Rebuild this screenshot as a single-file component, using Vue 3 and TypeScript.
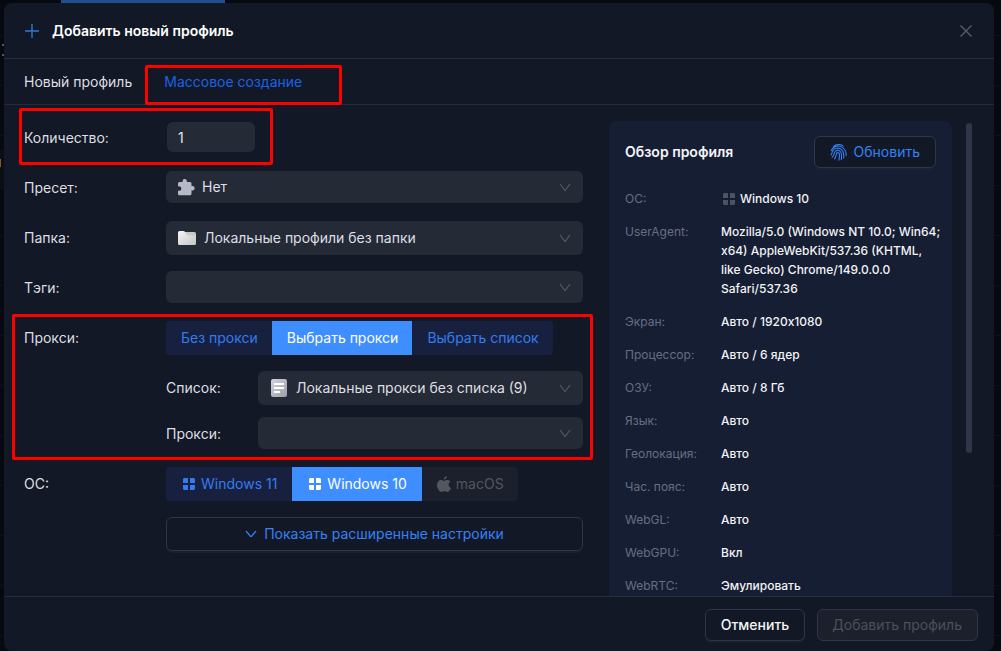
<script setup lang="ts">
import { ref } from 'vue'

const amount = ref('1')
const proxyMode = ref('pick')
const os = ref('win10')

const proxyModes = [
  { id: 'none', label: 'Без прокси' },
  { id: 'pick', label: 'Выбрать прокси' },
  { id: 'list', label: 'Выбрать список' },
]

const overview = [
  { name: 'ОС:', value: 'Windows 10', icon: true },
  { name: 'UserAgent:', value: 'Mozilla/5.0 (Windows NT 10.0; Win64; x64) AppleWebKit/537.36 (KHTML, like Gecko) Chrome/149.0.0.0 Safari/537.36' },
  { name: 'Экран:', value: 'Авто / 1920x1080' },
  { name: 'Процессор:', value: 'Авто / 6 ядер' },
  { name: 'ОЗУ:', value: 'Авто / 8 Гб' },
  { name: 'Язык:', value: 'Авто' },
  { name: 'Геолокация:', value: 'Авто' },
  { name: 'Час. пояс:', value: 'Авто' },
  { name: 'WebGL:', value: 'Авто' },
  { name: 'WebGPU:', value: 'Вкл' },
  { name: 'WebRTC:', value: 'Эмулировать' },
]
</script>

<template>
  <div class="page">
    <div class="backdrop-strip"></div>
    <div class="backdrop-band"></div>
    <div class="backdrop-mark upper"></div>
    <div class="backdrop-mark lower"></div>
    <section class="dialog" role="dialog" aria-labelledby="dialog-title">
      <header class="head">
        <svg class="plus" width="14" height="14" viewBox="0 0 14 14" aria-hidden="true">
          <path d="M7 0v14M0 7h14" stroke="currentColor" stroke-width="1.4" />
        </svg>
        <h1 id="dialog-title">Добавить новый профиль</h1>
        <button class="close" type="button" aria-label="Закрыть">
          <svg width="12" height="12" viewBox="0 0 12 12" aria-hidden="true">
            <path d="M0.5 0.5l11 11M11.5 0.5l-11 11" stroke="currentColor" stroke-width="1.3" />
          </svg>
        </button>
      </header>

      <nav class="tabs">
        <a href="#single">Новый профиль</a>
        <a href="#mass" class="active">Массовое создание<span class="mark mark-tab"></span></a>
      </nav>

      <main class="body">
        <form class="form" @submit.prevent>
          <div class="row">
            <label class="name" for="amount">Количество:</label>
            <input id="amount" v-model="amount" class="amount" type="text" inputmode="numeric" />
            <span class="mark mark-amount"></span>
          </div>

          <div class="row">
            <label class="name" for="preset">Пресет:</label>
            <div class="field">
              <svg class="lead puzzle" width="17" height="17" viewBox="0 0 17 17" aria-hidden="true">
                <path fill="#b6bac6" d="M1.5 3H4.6C4.3 1.2 5.2 0 6.7 0S9.1 1.2 8.8 3H12q1.500 0 1.500 1.500V7.200C15.300 6.700 16.600 7.700 16.600 9.300S15.300 11.900 13.500 11.300V14.800q0 1.500-1.500 1.500H1.500Q0 16.300 0 14.800V11.700C2 12.300 3.300 11.200 3.300 9.500S2 6.800 0 7.400V4.500Q0 3 1.500 3z" />
              </svg>
              <select id="preset"><option>Нет</option></select>
              <svg class="chev" width="12" height="9" viewBox="0 0 12 9" aria-hidden="true"><path d="M1 1l5 6.500 5-6.500" /></svg>
            </div>
          </div>

          <div class="row">
            <label class="name" for="folder">Папка:</label>
            <div class="field tall">
              <svg class="lead folder" width="18" height="14" viewBox="0 0 18 14" aria-hidden="true">
                <defs>
                  <linearGradient id="folder-fill" x1="0" y1="0" x2="1" y2="1">
                    <stop offset="0" stop-color="#f6f6f6" />
                    <stop offset="1" stop-color="#c4c4c4" />
                  </linearGradient>
                </defs>
                <path fill="#c9c9c9" d="M6 1H16.500Q18 1 18 2.500V8H6z" />
                <path fill="url(#folder-fill)" d="M0 1.500Q0 0 1.500 0H5.500Q6.500 0 7 1L8.500 3.500Q9 4.500 10 4.500H18V12.500Q18 14 16.500 14H1.500Q0 14 0 12.500z" />
              </svg>
              <select id="folder"><option>Локальные профили без папки</option></select>
              <svg class="chev" width="12" height="9" viewBox="0 0 12 9" aria-hidden="true"><path d="M1 1l5 6.500 5-6.500" /></svg>
            </div>
          </div>

          <div class="row">
            <label class="name" for="tags">Тэги:</label>
            <div class="field">
              <select id="tags"><option></option></select>
              <svg class="chev" width="12" height="9" viewBox="0 0 12 9" aria-hidden="true"><path d="M1 1l5 6.500 5-6.500" /></svg>
            </div>
          </div>

          <div class="row">
            <span id="proxy-name" class="name">Прокси:</span>
            <div class="stack">
              <div class="segments" role="radiogroup" aria-labelledby="proxy-name">
                <label v-for="m in proxyModes" :key="m.id" class="segment" :class="{ on: proxyMode === m.id }">
                  <input v-model="proxyMode" type="radio" name="proxy-mode" :value="m.id" />{{ m.label }}
                </label>
              </div>
              <div class="subrows">
                <div class="subrow">
                  <label class="subname" for="proxy-list">Список:</label>
                  <div class="field tall">
                    <svg class="lead note" width="16" height="18" viewBox="0 0 16 18" aria-hidden="true">
                      <defs>
                        <linearGradient id="note-fill" x1="0" y1="0" x2="1" y2="1">
                          <stop offset="0" stop-color="#d3d5df" />
                          <stop offset="1" stop-color="#9a9ca9" />
                        </linearGradient>
                      </defs>
                      <rect width="16" height="18" rx="2" fill="url(#note-fill)" />
                      <path d="M3 5h10M3 9h10M3 13h6" stroke="#fff" stroke-width="2" />
                    </svg>
                    <select id="proxy-list"><option>Локальные прокси без списка (9)</option></select>
                    <svg class="chev" width="12" height="9" viewBox="0 0 12 9" aria-hidden="true"><path d="M1 1l5 6.500 5-6.500" /></svg>
                  </div>
                </div>
                <div class="subrow">
                  <label class="subname" for="proxy">Прокси:</label>
                  <div class="field">
                    <select id="proxy"><option></option></select>
                    <svg class="chev" width="12" height="9" viewBox="0 0 12 9" aria-hidden="true"><path d="M1 1l5 6.500 5-6.500" /></svg>
                  </div>
                </div>
              </div>
            </div>
            <span class="mark mark-proxy"></span>
          </div>

          <div class="row">
            <span id="os-name" class="name">ОС:</span>
            <div class="stack">
              <div class="segments" role="radiogroup" aria-labelledby="os-name">
                <label class="segment os" :class="{ on: os === 'win11' }">
                  <input v-model="os" type="radio" name="os" value="win11" />
                  <svg width="12" height="12" viewBox="0 0 12 12" aria-hidden="true"><path fill="currentColor" d="M1 0h4v5H0V1zM7 0h4l1 1v4H7zM0 7h5v5H1l-1-1zM7 7h5v4l-1 1H7z" /></svg>
                  Windows 11
                </label>
                <label class="segment os" :class="{ on: os === 'win10' }">
                  <input v-model="os" type="radio" name="os" value="win10" />
                  <svg width="12" height="12" viewBox="0 0 12 12" aria-hidden="true"><path fill="currentColor" d="M1 0h4v5H0V1zM7 0h4l1 1v4H7zM0 7h5v5H1l-1-1zM7 7h5v4l-1 1H7z" /></svg>
                  Windows 10
                </label>
                <label class="segment off">
                  <input type="radio" name="os" value="mac" disabled />
                  <svg width="14" height="16" viewBox="0 0 14 16" aria-hidden="true">
                    <path fill="currentColor" d="M9.900 0C10 1.900 8.600 3.600 6.900 3.600 6.800 1.800 8.300.2 9.900 0zM7.200 4.800C8 4.800 8.800 4 10.300 4c1.200 0 2.400.6 3.100 1.600-2.600 1.600-2.300 5.200.6 6.300C13.200 14 11.800 16 10.300 16 9.200 16 8.700 15.300 7.400 15.300S5.500 16 4.500 16C2.400 16 0 12.200 0 9 0 5.800 2 4 4.100 4 5.400 4 6.400 4.800 7.200 4.800z" />
                  </svg>
                  macOS
                </label>
              </div>
              <button class="advanced" type="button">
                <svg width="12" height="8" viewBox="0 0 12 8" aria-hidden="true"><path d="M1 1l4.200 5q.8.800 1.600 0L11 1" fill="none" stroke="currentColor" stroke-width="1.200" /></svg>
                Показать расширенные настройки
              </button>
            </div>
          </div>
        </form>

        <aside class="card">
          <div class="card-head">
            <h2>Обзор профиля</h2>
            <button class="refresh" type="button">
              <svg width="17" height="17" viewBox="0 0 18 18" fill="none" stroke="currentColor" stroke-width="1.150" stroke-linecap="round" aria-hidden="true">
                <path d="M4 2.400C7-.1 11.500 0 14 2.300M1.300 7C3.600 1.700 9.500 1 13.300 3.800 15.800 5.600 17.400 8.500 17 12.500M1 11.500C2 10.500 2.200 9 2.700 7.700 4.500 3.800 9.500 3.500 12.300 6 14.700 8.200 14.900 11.500 14.400 15M2.300 14C4.300 12.500 4.200 10.500 4.900 8.900 6 6.400 9.500 6 11.200 8.200 12.600 10.200 12.400 13.500 11.900 16.700M4.800 15.800C6.500 14 6.300 12 6.900 10.200 7.400 8.700 9.500 8.700 9.900 10.300 10.400 12.500 9.900 15 9.400 17.200" />
              </svg>
              Обновить
            </button>
          </div>
          <dl class="facts">
            <div v-for="f in overview" :key="f.name" class="fact">
              <dt>{{ f.name }}</dt>
              <dd>
                <svg v-if="f.icon" width="12" height="12" viewBox="0 0 12 12" aria-hidden="true"><path fill="currentColor" d="M1 0h4v5H0V1zM7 0h4l1 1v4H7zM0 7h5v5H1l-1-1zM7 7h5v4l-1 1H7z" /></svg>{{ f.value }}
              </dd>
            </div>
          </dl>
        </aside>

        <div class="scroll"><div class="thumb"></div></div>
      </main>

      <footer class="foot">
        <button class="cancel" type="button">Отменить</button>
        <button class="submit" type="button" disabled>Добавить профиль</button>
      </footer>
    </section>
  </div>
</template>

<style>
body {
  background: #06090f;
}
</style>

<style scoped>
.page {
  position: relative;
  box-sizing: border-box;
  height: 100vh;
  padding: 3px 7px 0 4px;
  overflow: hidden;
  font-family: Inter, "Liberation Sans", sans-serif;
  font-size: 14px;
  line-height: 20px;
  color: #dedfe2;
  background: repeating-linear-gradient(#06090f 0 35px, #0d1018 35px 36px, #06090f 36px 50px);
}

.backdrop-strip {
  position: absolute;
  top: 0;
  left: 61px;
  width: 164px;
  height: 3px;
  background: #214f92;
}

.backdrop-band {
  position: absolute;
  top: 149px;
  left: 0;
  width: 10px;
  height: 40px;
  background: #0b0e16;
}

.backdrop-mark {
  position: absolute;
  left: 2px;
  width: 2px;
  height: 8px;
  border: solid #4d5a66;
  border-width: 2px 0;
}

.upper {
  top: 44px;
}

.lower {
  top: 159px;
  left: 0;
  width: 1px;
  border: 0;
  background: #8a5a20;
}

.dialog {
  position: relative;
  display: flex;
  flex-direction: column;
  height: 100%;
  overflow: hidden;
  background: #121825;
  border-radius: 8px;
}

.dialog * {
  box-sizing: border-box;
}

button,
input,
select {
  font: inherit;
  color: inherit;
  margin: 0;
}

.head {
  display: flex;
  align-items: center;
  flex: none;
  height: 56px;
  padding: 0 22px 0 21px;
  border-bottom: 1px solid #292e3a;
}

.plus {
  color: #3275d8;
}

h1 {
  margin: 0 auto 0 13px;
  font-size: 14px;
  font-weight: 600;
  color: #fff;
}

.close {
  display: flex;
  padding: 0;
  border: 0;
  background: none;
  color: #566073;
}

.tabs {
  display: flex;
  align-items: center;
  flex: none;
  gap: 32px;
  height: 46px;
  padding: 0 20px;
  border-bottom: 1px solid #2b2c31;
}

.tabs a {
  position: relative;
  color: inherit;
  text-decoration: none;
}

.tabs .active {
  color: #1d62e4;
}

.mark {
  position: absolute;
  z-index: 2;
  border: 3px solid #fe0000;
  border-radius: 2px;
  pointer-events: none;
}

.mark-tab {
  inset: -7px -40px -13px -19px;
}

.mark-amount {
  top: -13px;
  left: -5px;
  width: 254px;
  height: 57px;
}

.mark-proxy {
  inset: -7px -10px -9px -12px;
}

.body {
  display: flex;
  flex: 1;
  min-height: 0;
  padding: 16px 22px 0 20px;
}

.form {
  display: flex;
  flex: 1;
  flex-direction: column;
  gap: 16px;
}

.row {
  position: relative;
  display: flex;
  min-height: 34px;
  align-items: flex-start;
}

.name {
  flex: none;
  width: 142px;
  line-height: 34px;
}

.amount {
  width: 90px;
  height: 32px;
  padding: 0 11px;
  border: 1px solid #121825;
  border-radius: 7px;
  background: #252a37;
  color: #e4e5e8;
}

.field {
  display: flex;
  flex: 1;
  align-items: center;
  height: 32px;
  padding: 0 12px;
  border-radius: 6px;
  background: #252a37;
}

.field.tall {
  height: 34px;
}

.lead {
  flex: none;
}

.puzzle {
  margin-right: 7px;
}

.folder {
  margin-right: 8px;
}

.note {
  margin: 0 9px 0 1px;
}

.field select {
  flex: 1;
  min-width: 0;
  height: 100%;
  padding: 0;
  border: 0;
  outline: 0;
  appearance: none;
  background: transparent;
}

.chev {
  flex: none;
  fill: none;
  stroke: #555a66;
  stroke-width: 1.2;
}

.stack {
  display: flex;
  flex: 1;
  flex-direction: column;
  gap: 16px;
}

.subrows {
  display: flex;
  flex-direction: column;
  gap: 12px;
}

.subrow {
  display: flex;
  min-height: 34px;
  align-items: flex-start;
}

.subname {
  width: 92px;
  line-height: 34px;
}

.segments {
  display: flex;
  align-self: flex-start;
  height: 34px;
  overflow: hidden;
  border-radius: 4px;
}

.segment {
  display: flex;
  align-items: center;
  padding: 0 14px 0 15px;
  background: #182040;
  color: #347bf0;
}

.segment input {
  appearance: none;
  width: 0;
  height: 0;
}

.segment svg {
  margin-right: 6px;
}

.segment.os {
  padding: 0 15px 0 17px;
}

.segment.on {
  background: #3e8eff;
  color: #fff;
}

.segment.off {
  background: #1b202c;
  color: #53565e;
}

.segment.off svg {
  margin-right: 5px;
}

.advanced {
  display: flex;
  align-items: center;
  justify-content: center;
  gap: 7px;
  height: 34px;
  border: 1px solid #2f354b;
  border-radius: 6px;
  background: #121825;
  box-shadow: 0 2px 0 #1a1f2d;
  color: #3581f8;
}

.card {
  flex: none;
  width: 343px;
  margin-left: 26px;
  padding: 15px 8px 0 16px;
  overflow: hidden;
  border-radius: 8px 8px 0 0;
  background: #161e33;
}

.card-head {
  display: flex;
  align-items: center;
  justify-content: space-between;
  margin-right: 8px;
}

h2 {
  margin: 0;
  font-size: 14px;
  font-weight: 600;
  color: #f4f5f8;
}

.refresh {
  display: flex;
  align-items: center;
  gap: 7px;
  height: 32px;
  padding: 0 15px;
  border: 1px solid #2f354b;
  border-radius: 6px;
  background: #121825;
  box-shadow: 0 2px 0 #1b2238;
  color: #3581f8;
}

.facts {
  display: flex;
  flex-direction: column;
  gap: 14px;
  margin: 21px 0 0;
  font-size: 12px;
  line-height: 19px;
}

.fact {
  display: flex;
}

dt {
  flex: none;
  width: 96px;
  color: #666e84;
}

dd {
  flex: 1;
  min-width: 0;
  margin: 0;
  font-weight: 500;
  color: #f2f3f6;
}

dd svg {
  margin: 0 5px 0 2px;
  vertical-align: -2px;
  color: #4b5365;
}

.scroll {
  flex: none;
  width: 6px;
  margin-left: 14px;
  padding-top: 2px;
}

.thumb {
  height: 330px;
  border-radius: 3px;
  background: #30364a;
}

.foot {
  display: flex;
  flex: none;
  align-items: center;
  justify-content: flex-end;
  gap: 12px;
  height: 55px;
  padding: 2px 16px 0;
  border-top: 1px solid #252e42;
}

.foot button {
  height: 32px;
  padding: 0 15px;
  border: 1px solid #2f354b;
  border-radius: 6px;
}

.cancel {
  background: #121825;
  box-shadow: 0 2px 0 #1a1f2d;
  color: #f4f5f7;
  font-weight: 500;
}

.foot .submit {
  padding: 0 15px 0 14px;
  background: #1b202c;
  color: #4c5059;
}
</style>
